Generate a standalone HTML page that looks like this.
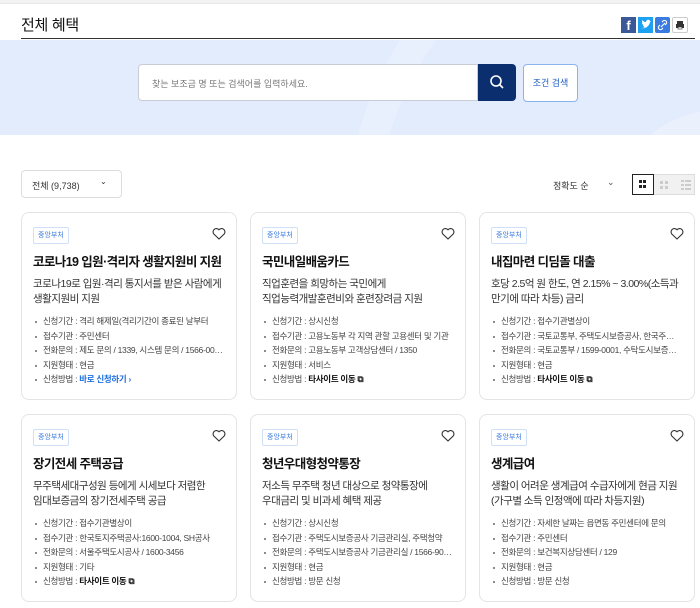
<!DOCTYPE html>
<html><head><meta charset="utf-8"><style>
*{margin:0;padding:0;box-sizing:border-box}
body{width:700px;height:608px;overflow:hidden;background:#fff;font-family:"Liberation Sans","Noto Sans CJK KR",sans-serif;color:#222;position:relative}
.abs{position:absolute}
.topbar{left:0;top:0;width:700px;height:4px;background:#f3f3f3;border-bottom:1px solid #e6e6e6}
.h1{left:21px;top:14px;font-size:15px;color:#111;letter-spacing:-0.3px}
.hline{left:21px;top:38px;width:674px;height:1px;background:#333}
.banner{left:0;top:40px;width:700px;height:95px;background:#e2ecfc;overflow:hidden}
.search{left:138px;top:64px;width:340px;height:37px;background:#fff;border:1px solid #c8ccd4;border-radius:4px 0 0 4px;font-size:9px;color:#777;padding:12px 0 0 13px}
.sbtn{left:478px;top:64px;width:38px;height:37px;background:#0b2f6e;border-radius:0 4px 4px 0}
.cbtn{left:523px;top:64px;width:55px;height:38px;background:#fff;border:1px solid #8ab4ee;border-radius:4px;color:#1f5fc4;font-size:9px;text-align:center;line-height:36px}
.sel{left:21px;top:170px;width:101px;height:28px;border:1px solid #ddd;border-radius:4px;font-size:9px;color:#333;padding:8px 0 0 10px}
.card{width:216px;height:188px;border:1px solid #e4e4e4;border-radius:8px;background:#fff}
.badge{position:absolute;left:11px;top:14px;height:17px;padding:0 4px;border:1px solid #cfe0f7;border-radius:2px;font-size:7px;color:#3a7be0;line-height:15px;background:#fff}
.heart{position:absolute;right:10px;top:14px}
.tt{position:absolute;left:11px;top:38px;font-size:12.5px;font-weight:bold;color:#111;white-space:nowrap;letter-spacing:-0.6px}
.ds{position:absolute;left:11px;top:64px;width:200px;font-size:10.5px;line-height:14.5px;color:#333;letter-spacing:-0.5px}
ul{position:absolute;left:11px;top:101px;list-style:none;font-size:8.5px;color:#444;line-height:14.6px;width:190px}
li{white-space:nowrap;overflow:hidden;text-overflow:ellipsis;padding-left:10px;position:relative;letter-spacing:-0.3px}
li:before{content:"";position:absolute;left:2px;top:7px;width:2px;height:2px;background:#666;border-radius:1px}
b.k{color:#111}
b.l{color:#1f6fe0}
</style></head><body>
<div class="abs topbar"></div>
<div class="abs h1">전체 혜택</div>
<div class="abs" style="left:621px;top:17px;width:15px;height:16px;background:#3b5998;color:#fff;font-weight:bold;font-size:13px;text-align:center;line-height:17px">f</div>
<div class="abs" style="left:638px;top:17px;width:15px;height:16px;background:#1da1f2"><svg width="15" height="16"><path d="M3 11c4 1 8-1 9-6l1-1-1 0c0-1-2-2-3-1-1 1-1 2-1 2-2 0-3-1-4-2 0 2 0 3 1 3h-1c0 1 1 2 2 2h-1c0 1 1 2 2 2-1 1-3 1-4 1z" fill="#fff"/></svg></div>
<div class="abs" style="left:655px;top:17px;width:15px;height:16px;background:#3a7be0;border-radius:2px"><svg width="15" height="16"><path d="M6 10l4-4M5 8l-1 1a2 2 0 003 3l1-1M10 8l1-1a2 2 0 00-3-3L7 5" stroke="#fff" fill="none" stroke-width="1.1"/></svg></div>
<div class="abs" style="left:672px;top:17px;width:16px;height:16px;border:1px solid #ccc;border-radius:2px;background:#fff"><svg width="14" height="14"><rect x="4" y="3" width="6" height="3" fill="#333"/><rect x="3" y="6" width="8" height="4" fill="#333"/><rect x="5" y="9" width="4" height="2" fill="#fff" stroke="#333" stroke-width=".6"/></svg></div>
<div class="abs hline"></div>
<div class="abs banner"><svg width="700" height="95" style="position:absolute;left:0;top:0"><circle cx="700" cy="190" r="340" fill="none" stroke="#e8f0fd" stroke-width="30"/><circle cx="720" cy="180" r="110" fill="#eaf1fd"/></svg></div>
<div class="abs search">찾는 보조금 명 또는 검색어를 입력하세요.</div>
<div class="abs sbtn"><svg width="38" height="37"><circle cx="18" cy="17" r="5" fill="none" stroke="#fff" stroke-width="1.6"/><path d="M21.5 20.5l3.5 3.5" stroke="#fff" stroke-width="1.6"/></svg></div>
<div class="abs cbtn">조건 검색</div>
<div class="abs sel">전체 (9,738)<span style="position:absolute;left:78px;top:6px;font-size:8px">⌄</span></div>
<div class="abs" style="left:553px;top:179px;font-size:9px;color:#333">정확도 순</div>
<div class="abs" style="left:607px;top:177px;font-size:9px;color:#555">⌄</div>
<div class="abs" style="left:632px;top:174px;width:63px;height:21px;border:1px solid #ddd;background:#f1f1f1"></div>
<div class="abs" style="left:632px;top:174px;width:22px;height:21px;border:1px solid #222;background:#fff"><svg width="20" height="19"><rect x="6" y="5" width="3" height="3" fill="#222"/><rect x="10" y="5" width="3" height="3" fill="#222"/><rect x="6" y="10" width="3" height="3" fill="#222"/><rect x="10" y="10" width="3" height="3" fill="#222"/></svg></div>
<div class="abs" style="left:658px;top:178px"><svg width="12" height="12"><g fill="#ccc"><rect x="2" y="2" width="3" height="3"/><rect x="7" y="2" width="3" height="3"/><rect x="2" y="7" width="3" height="3"/><rect x="7" y="7" width="3" height="3"/></g></svg></div>
<div class="abs" style="left:680px;top:178px"><svg width="12" height="12"><g fill="#ccc"><rect x="1" y="1" width="3" height="2"/><rect x="5" y="1" width="6" height="2"/><rect x="1" y="5" width="3" height="2"/><rect x="5" y="5" width="6" height="2"/><rect x="1" y="9" width="3" height="2"/><rect x="5" y="9" width="6" height="2"/></g></svg></div>

<div class="abs card" style="left:21px;top:212px">
<div class="badge">중앙부처</div><svg class="heart" width="14" height="13"><path d="M7 12L1.8 7A3 3 0 017 2.8 3 3 0 0112.2 7z" fill="none" stroke="#333" stroke-width="1.1"/></svg>
<div class="tt">코로나19 입원·격리자 생활지원비 지원</div>
<div class="ds">코로나19로 입원·격리 통지서를 받은 사람에게<br>생활지원비 지원</div>
<ul><li>신청기간 : 격리 해제일(격리기간이 종료된 날부터</li><li>접수기관 : 주민센터</li><li>전화문의 : 제도 문의 / 1339, 시스템 문의 / 1566-0000</li><li>지원형태 : 현금</li><li>신청방법 : <b class="l">바로 신청하기 ›</b></li></ul></div>

<div class="abs card" style="left:250px;top:212px">
<div class="badge">중앙부처</div><svg class="heart" width="14" height="13"><path d="M7 12L1.8 7A3 3 0 017 2.8 3 3 0 0112.2 7z" fill="none" stroke="#333" stroke-width="1.1"/></svg>
<div class="tt">국민내일배움카드</div>
<div class="ds">직업훈련을 희망하는 국민에게<br>직업능력개발훈련비와 훈련장려금 지원</div>
<ul><li>신청기간 : 상시신청</li><li>접수기관 : 고용노동부 각 지역 관할 고용센터 및 기관</li><li>전화문의 : 고용노동부 고객상담센터 / 1350</li><li>지원형태 : 서비스</li><li>신청방법 : <b class="k">타사이트 이동 ⧉</b></li></ul></div>

<div class="abs card" style="left:479px;top:212px">
<div class="badge">중앙부처</div><svg class="heart" width="14" height="13"><path d="M7 12L1.8 7A3 3 0 017 2.8 3 3 0 0112.2 7z" fill="none" stroke="#333" stroke-width="1.1"/></svg>
<div class="tt">내집마련 디딤돌 대출</div>
<div class="ds">호당 2.5억 원 한도, 연 2.15% ~ 3.00%(소득과<br>만기에 따라 차등) 금리</div>
<ul><li>신청기간 : 접수기관별상이</li><li>접수기관 : 국토교통부, 주택도시보증공사, 한국주택금융</li><li>전화문의 : 국토교통부 / 1599-0001, 수탁도시보증공사</li><li>지원형태 : 현금</li><li>신청방법 : <b class="k">타사이트 이동 ⧉</b></li></ul></div>

<div class="abs card" style="left:21px;top:414px">
<div class="badge">중앙부처</div><svg class="heart" width="14" height="13"><path d="M7 12L1.8 7A3 3 0 017 2.8 3 3 0 0112.2 7z" fill="none" stroke="#333" stroke-width="1.1"/></svg>
<div class="tt">장기전세 주택공급</div>
<div class="ds">무주택세대구성원 등에게 시세보다 저렴한<br>임대보증금의 장기전세주택 공급</div>
<ul><li>신청기간 : 접수기관별상이</li><li>접수기관 : 한국토지주택공사:1600-1004, SH공사</li><li>전화문의 : 서울주택도시공사 / 1600-3456</li><li>지원형태 : 기타</li><li>신청방법 : <b class="k">타사이트 이동 ⧉</b></li></ul></div>

<div class="abs card" style="left:250px;top:414px">
<div class="badge">중앙부처</div><svg class="heart" width="14" height="13"><path d="M7 12L1.8 7A3 3 0 017 2.8 3 3 0 0112.2 7z" fill="none" stroke="#333" stroke-width="1.1"/></svg>
<div class="tt">청년우대형청약통장</div>
<div class="ds">저소득 무주택 청년 대상으로 청약통장에<br>우대금리 및 비과세 혜택 제공</div>
<ul><li>신청기간 : 상시신청</li><li>접수기관 : 주택도시보증공사 기금관리실, 주택청약</li><li>전화문의 : 주택도시보증공사 기금관리실 / 1566-9009</li><li>지원형태 : 현금</li><li>신청방법 : 방문 신청</li></ul></div>

<div class="abs card" style="left:479px;top:414px">
<div class="badge">중앙부처</div><svg class="heart" width="14" height="13"><path d="M7 12L1.8 7A3 3 0 017 2.8 3 3 0 0112.2 7z" fill="none" stroke="#333" stroke-width="1.1"/></svg>
<div class="tt">생계급여</div>
<div class="ds">생활이 어려운 생계급여 수급자에게 현금 지원<br>(가구별 소득 인정액에 따라 차등지원)</div>
<ul><li>신청기간 : 자세한 날짜는 읍면동 주민센터에 문의</li><li>접수기관 : 주민센터</li><li>전화문의 : 보건복지상담센터 / 129</li><li>지원형태 : 현금</li><li>신청방법 : 방문 신청</li></ul></div>
</body></html>
